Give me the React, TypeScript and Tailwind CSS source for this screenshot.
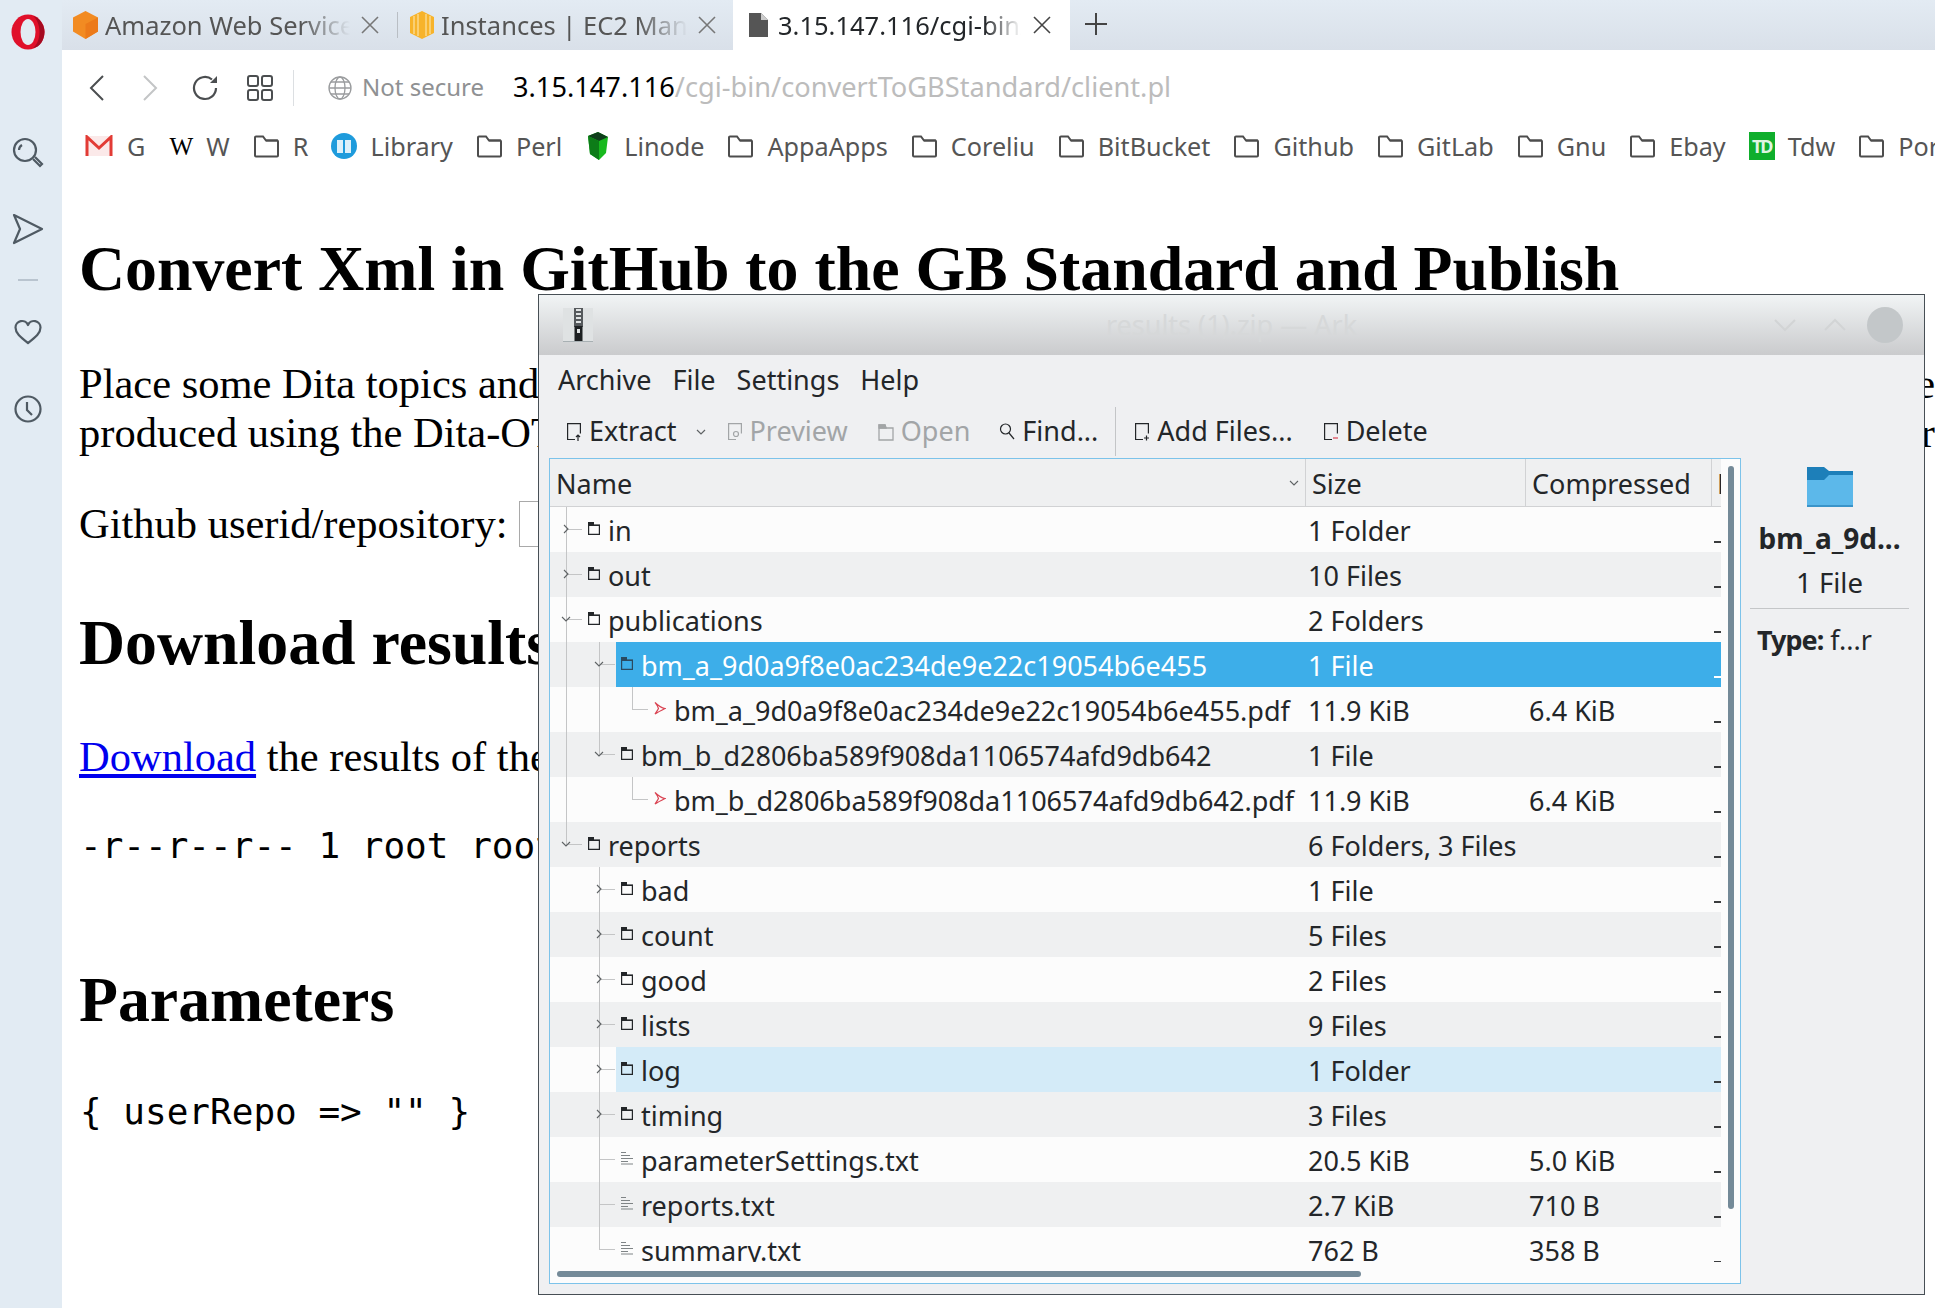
import type { ReactNode } from 'react';

type Kind = 'folder' | 'pdf' | 'txt';

interface Row {
  name: string;
  size: string;
  compressed?: string;
  level: number;
  kind: Kind;
  open?: boolean;
  selected?: boolean;
  hover?: boolean;
  // vertical guide lines: [level, stops at row middle]
  guides: [number, boolean][];
}

const rows: Row[] = [
  { name: 'in', size: '1 Folder', level: 0, kind: 'folder', guides: [[0, false]] },
  { name: 'out', size: '10 Files', level: 0, kind: 'folder', guides: [[0, false]] },
  { name: 'publications', size: '2 Folders', level: 0, kind: 'folder', open: true, guides: [[0, false]] },
  { name: 'bm_a_9d0a9f8e0ac234de9e22c19054b6e455', size: '1 File', level: 1, kind: 'folder', open: true, selected: true, guides: [[0, false], [1, false]] },
  { name: 'bm_a_9d0a9f8e0ac234de9e22c19054b6e455.pdf', size: '11.9 KiB', compressed: '6.4 KiB', level: 2, kind: 'pdf', guides: [[0, false], [1, false], [2, true]] },
  { name: 'bm_b_d2806ba589f908da1106574afd9db642', size: '1 File', level: 1, kind: 'folder', open: true, guides: [[0, false], [1, true]] },
  { name: 'bm_b_d2806ba589f908da1106574afd9db642.pdf', size: '11.9 KiB', compressed: '6.4 KiB', level: 2, kind: 'pdf', guides: [[0, false], [2, true]] },
  { name: 'reports', size: '6 Folders, 3 Files', level: 0, kind: 'folder', open: true, guides: [[0, true]] },
  { name: 'bad', size: '1 File', level: 1, kind: 'folder', guides: [[1, false]] },
  { name: 'count', size: '5 Files', level: 1, kind: 'folder', guides: [[1, false]] },
  { name: 'good', size: '2 Files', level: 1, kind: 'folder', guides: [[1, false]] },
  { name: 'lists', size: '9 Files', level: 1, kind: 'folder', guides: [[1, false]] },
  { name: 'log', size: '1 Folder', level: 1, kind: 'folder', hover: true, guides: [[1, false]] },
  { name: 'timing', size: '3 Files', level: 1, kind: 'folder', guides: [[1, false]] },
  { name: 'parameterSettings.txt', size: '20.5 KiB', compressed: '5.0 KiB', level: 1, kind: 'txt', guides: [[1, false]] },
  { name: 'reports.txt', size: '2.7 KiB', compressed: '710 B', level: 1, kind: 'txt', guides: [[1, false]] },
  { name: 'summary.txt', size: '762 B', compressed: '358 B', level: 1, kind: 'txt', guides: [[1, true]] },
];

const bookmarks = ['Perl', 'Linode', 'AppaApps', 'Coreliu', 'BitBucket', 'Github', 'GitLab', 'Gnu', 'Ebay', 'Tdw', 'Por'];

function FolderOutline() {
  return (
    <svg width="27" height="24" viewBox="0 0 27 24" fill="none" stroke="#4d4d4d" strokeWidth="2" className="shrink-0">
      <path d="M2 21.5V3.5a1 1 0 0 1 1-1h7l3 4h11a1 1 0 0 1 1 1v14a1 1 0 0 1-1 1H3a1 1 0 0 1-1-1z" />
      <path d="M13 6.5h12" />
    </svg>
  );
}

function TreeIcon({ kind, selected }: { kind: Kind; selected?: boolean }) {
  if (kind === 'pdf') {
    return (
      <svg width="12" height="14" viewBox="0 0 12 14" fill="none" stroke="#da4453" strokeWidth="1.2" className="shrink-0">
        <path d="M1 1.500C3 4 4 6 4.500 7.500 3.500 9.500 2 11.500 1 13c3-2 6-3.500 10-5.500-3.500-.5-7-3-10-6z" />
      </svg>
    );
  }
  if (kind === 'txt') {
    return (
      <svg width="12" height="14" viewBox="0 0 12 14" stroke="#7f8486" strokeWidth="1.2" className="shrink-0">
        <path d="M0 1.500h5M0 4.500h9M0 7.500h12M0 10.500h7M0 13h12" />
      </svg>
    );
  }
  const color = selected ? '#2a4a60' : '#232629';
  return (
    <svg width="12" height="13" viewBox="0 0 12 13" fill="none" stroke={color} strokeWidth="1.2" className="shrink-0">
      <path d="M.6 12.400V3h10.800v9.400z" />
      <path d="M0 0h6v3.400H0z" fill={color} stroke="none" />
      <path d="M0 2.800h12v1.200H0z" fill={color} stroke="none" />
    </svg>
  );
}

function Chevron({ open }: { open?: boolean }) {
  return (
    <svg width="10" height="10" viewBox="0 0 10 10" fill="none" stroke="#5f6365" strokeWidth="1.1">
      <path d={open ? 'M1 3l4 4 4-4' : 'M3 1l4 4-4 4'} />
    </svg>
  );
}

function TreeRow({ row, index }: { row: Row; index: number }) {
  const x = 16 + row.level * 33;
  const bg = index % 2 === 0 ? 'bg-[#fcfcfc]' : 'bg-[#eff0f1]';
  return (
    <div className={`relative flex h-[45px] shrink-0 items-center pt-[4px] text-[#232629] ${bg}`}>
      {row.selected && <div className="absolute inset-y-0 left-[66px] right-0 bg-[#3daee9]" />}
      {row.hover && <div className="absolute inset-y-0 left-[66px] right-0 bg-[#d4ebf8]" />}

      {/* tree guide lines */}
      {row.guides.map(([level, half]) => (
        <div
          key={level}
          className={`absolute top-0 w-px bg-[#c4c5c6] ${half ? 'h-[22px]' : 'h-[45px]'}`}
          style={{ left: 16 + level * 33 }}
        />
      ))}
      <div className="absolute top-[22px] h-px w-[16px] bg-[#c4c5c6]" style={{ left: x }} />
      {row.kind === 'folder' && (
        <div className="absolute top-[17px]" style={{ left: x - 5 }}>
          <Chevron open={row.open} />
        </div>
      )}

      <div className="relative flex w-[755px] shrink-0 items-center gap-[8px] whitespace-nowrap" style={{ paddingLeft: x + 22 }}>
        <div className="-mt-[7px] flex">
          <TreeIcon kind={row.kind} selected={row.selected} />
        </div>
        <span className={row.selected ? 'text-white' : ''}>{row.name}</span>
      </div>
      <div className={`relative w-[224px] shrink-0 pl-[3px] ${row.selected ? 'text-white' : ''}`}>{row.size}</div>
      <div className="relative pl-0">{row.compressed}</div>
      <div className={`absolute bottom-[9px] right-0 h-[2px] w-[7px] ${row.selected ? 'bg-white' : 'bg-[#3a3c3e]'}`} />
    </div>
  );
}

function ToolButton({ icon, label, disabled, className }: { icon: ReactNode; label: string; disabled?: boolean; className?: string }) {
  return (
    <div className={`flex items-center gap-[7px] ${disabled ? 'text-[#a2a5a7]' : 'text-[#232629]'} ${className ?? ''}`}>
      {icon}
      <span>{label}</span>
    </div>
  );
}

function DocIcon({ stroke = '#232629', mark }: { stroke?: string; mark?: ReactNode }) {
  return (
    <svg width="16" height="20" viewBox="0 0 16 20" fill="none" stroke={stroke} strokeWidth="1.2" className="shrink-0">
      <path d="M9 17.500H1.600V1.600h12.800v10" />
      {mark}
    </svg>
  );
}

function ArkWindow() {
  return (
    <div className="absolute left-[538px] top-[294px] flex h-[1001px] w-[1387px] flex-col border-[1px] border-[#474f55] bg-[#eff0f2] font-['Noto_Sans',sans-serif] text-[27px]">
      {/* title bar */}
      <div className="relative flex h-[60px] shrink-0 items-center bg-gradient-to-b from-[#f1f4f5] to-[#cacbcd]">
        <svg width="30" height="34" viewBox="0 0 30 34" className="ml-[24px] shrink-0">
          <rect width="30" height="34" fill="#dfe2e3" />
          <rect y="33" width="30" height="1" fill="#a8b0b3" />
          <path d="M11 0h9v19h-9z" fill="#55595c" />
          <path d="M13 1h5v2h-5zM13 5h5v2h-5zM13 9h5v2h-5zM13 13h5v2h-5z" fill="#dfe2e3" />
          <rect x="11.500" y="18" width="8" height="15" fill="#1d2022" />
          <rect x="14" y="21" width="3" height="4" fill="#dfe2e3" />
        </svg>
        <div className="absolute inset-x-0 top-[10px] text-center text-[#d6d8d9]">results (1).zip — Ark</div>
        <svg width="24" height="14" viewBox="0 0 24 14" fill="none" stroke="#d2d4d5" strokeWidth="2" className="ml-auto">
          <path d="M2 2l10 10L22 2" />
        </svg>
        <svg width="24" height="14" viewBox="0 0 24 14" fill="none" stroke="#d2d4d5" strokeWidth="2" className="ml-[26px]">
          <path d="M2 12L12 2l10 10" />
        </svg>
        <div className="ml-[20px] mr-[21px] h-[36px] w-[36px] rounded-full bg-[#c3c7c9]" />
      </div>

      {/* menu bar */}
      <div className="flex h-[50px] shrink-0 items-center gap-[21px] pl-[19px] text-[#232629]">
        <span>Archive</span>
        <span>File</span>
        <span>Settings</span>
        <span>Help</span>
      </div>

      {/* toolbar */}
      <div className="flex h-[53px] shrink-0 items-center pl-[27px]">
        <ToolButton icon={<DocIcon mark={<path d="M12 19v-6M10 15l2-2 2 2" />} />} label="Extract" />
        <svg width="10" height="8" viewBox="0 0 10 8" fill="none" stroke="#5f6365" strokeWidth="1.2" className="ml-[19px]">
          <path d="M1 2l4 4 4-4" />
        </svg>
        <ToolButton className="ml-[21px]" disabled icon={<DocIcon stroke="#a2a5a7" mark={<circle cx="9" cy="12" r="2.500" />} />} label="Preview" />
        <ToolButton
          className="ml-[30px]"
          disabled
          icon={
            <svg width="16" height="18" viewBox="0 0 16 18" fill="none" stroke="#a2a5a7" strokeWidth="1.3" className="shrink-0">
              <path d="M1 17V2h6l1 3h7v12zM1 5h14" />
              <path d="M1 2h6l1 3H1z" fill="#a2a5a7" />
            </svg>
          }
          label="Open"
        />
        <ToolButton
          className="ml-[29px]"
          icon={
            <svg width="16" height="19" viewBox="0 0 16 19" fill="none" stroke="#232629" strokeWidth="1.2" className="shrink-0">
              <circle cx="6.500" cy="7" r="5" />
              <path d="M10 11l5 6" />
            </svg>
          }
          label="Find..."
        />
        <div className="ml-[17px] h-[49px] w-px bg-[#c3c5c7]" />
        <ToolButton className="ml-[18px]" icon={<DocIcon mark={<path d="M10 16h5M12.500 13.500v5" />} />} label="Add Files..." />
        <ToolButton className="ml-[30px]" icon={<DocIcon mark={<path d="M10 16h5" stroke="#da4453" />} />} label="Delete" />
      </div>

      <div className="flex min-h-0 flex-1">
        {/* archive tree */}
        <div className="relative ml-[10px] h-[826px] w-[1192px] shrink-0 overflow-hidden border border-[#7cc3ea] bg-[#fcfcfc]">
          <div className="flex h-[48px] w-[1171px] items-center border-b border-[#d1d2d4] bg-[#eff0f1] text-[#232629]">
            <div className="relative flex h-full w-[755px] shrink-0 items-center pl-[6px] pt-[3px]">
              Name
              <svg width="10" height="8" viewBox="0 0 10 8" fill="none" stroke="#5f6365" strokeWidth="1.1" className="absolute right-[6px] top-[20px]">
                <path d="M1 2l4 4 4-4" />
              </svg>
            </div>
            <div className="flex h-full w-[220px] shrink-0 items-center border-l border-[#d1d2d4] pl-[6px] pt-[3px]">Size</div>
            <div className="flex h-full w-[186px] shrink-0 items-center border-l border-[#d1d2d4] pl-[6px] pt-[3px]">Compressed</div>
            <div className="flex h-full w-[10px] shrink-0 items-center overflow-hidden border-l border-[#d1d2d4] pl-[5px] pt-[3px]">Ratio</div>
          </div>
          <div className="flex h-[755px] w-[1171px] flex-col overflow-hidden">
            {rows.map((row, i) => (
              <TreeRow key={row.name + i} row={row} index={i} />
            ))}
          </div>
          {/* scrollbars */}
          <div className="absolute right-[6px] top-[7px] h-[743px] w-[6px] rounded-full bg-[#748a98]" />
          <div className="absolute bottom-[6px] left-[7px] h-[6px] w-[804px] rounded-full bg-[#748a98]" />
        </div>

        {/* details panel */}
        <div className="ml-[9px] flex w-[159px] flex-col items-center text-[#232629]">
          <svg width="46" height="40" viewBox="0 0 46 40" className="mt-[9px] shrink-0">
            <path d="M0 0h17l5 4h24v36H0z" fill="#1d7fb9" />
            <path d="M0 13h17l5-5h24v32H0z" fill="#5cb8ea" />
            <rect y="38" width="46" height="2" fill="#3a94c9" />
          </svg>
          <div className="mt-[11px] whitespace-nowrap text-[28px] font-bold leading-[40px]">bm_a_9d...</div>
          <div className="mt-[5px] text-[27.5px] leading-[40px]">1 File</div>
          <div className="mt-[5px] h-px w-full bg-[#c4c6c8]" />
          <div className="mt-[11px] w-full pl-[7px] leading-[40px]">
            <span className="font-bold tracking-[-1px]">Type:</span> f...r
          </div>
        </div>
      </div>
    </div>
  );
}

function BrowserChrome() {
  return (
    <>
      {/* tab strip */}
      <div className="flex h-[50px] shrink-0 items-stretch bg-gradient-to-b from-[#e3ebf3] to-[#d9e0e9] pl-[11px] text-[25.5px] text-[#555]">
        <div className="flex w-[324px] items-center gap-[7px]">
          <svg width="25" height="28" viewBox="0 0 25 28" className="shrink-0">
            <path d="M12.500 0L25 6.500v14L12.500 28 0 20.500v-14z" fill="#f28b22" />
            <path d="M12.500 13L25 6.500v14L12.500 28z" fill="#ec7a1a" />
          </svg>
          <span className="w-[245px] overflow-hidden whitespace-nowrap [mask-image:linear-gradient(to_right,black_80%,transparent)]">Amazon Web Services</span>
          <span className="ml-[4px] text-[#777]">
            <CloseIcon />
          </span>
        </div>
        <div className="my-[12px] w-px bg-[#b9bec4]" />
        <div className="flex w-[335px] items-center gap-[7px] pl-[12px]">
          <svg width="24" height="28" viewBox="0 0 24 28" className="shrink-0">
            <path d="M12 0l12 6v16l-12 6-12-6V6z" fill="#f7b32b" />
            <path d="M4 5v18M8 3v22M16 3v22M20 5v18" stroke="#fcd98a" strokeWidth="1.500" />
          </svg>
          <span className="w-[247px] overflow-hidden whitespace-nowrap [mask-image:linear-gradient(to_right,black_80%,transparent)]">Instances | EC2 Management</span>
          <span className="ml-[3px] text-[#777]">
            <CloseIcon />
          </span>
        </div>
        <div className="flex w-[337px] items-center gap-[10px] bg-white pl-[16px] text-[#232629]">
          <svg width="19" height="24" viewBox="0 0 19 24" className="shrink-0">
            <path d="M0 0h12l7 7v17H0z" fill="#555" />
            <path d="M12 0v7h7z" fill="#ccc" />
          </svg>
          <span className="w-[243px] overflow-hidden whitespace-nowrap [mask-image:linear-gradient(to_right,black_85%,transparent)]">3.15.147.116/cgi-bin/convertToGBStandard</span>
          <span className="ml-[2px] text-[#444]">
            <CloseIcon />
          </span>
        </div>
        <svg width="22" height="22" viewBox="0 0 22 22" stroke="#444" strokeWidth="2" className="ml-[15px] mt-[13px]">
          <path d="M11 0v22M0 11h22" />
        </svg>
      </div>

      {/* address bar */}
      <div className="flex h-[75px] shrink-0 items-center bg-white pl-[26px] font-['Noto_Sans',sans-serif] text-[27.2px]">
        <svg width="18" height="28" viewBox="0 0 18 28" fill="none" stroke="#4b4e50" strokeWidth="2" className="shrink-0">
          <path d="M15 2L3 14l12 12" />
        </svg>
        <svg width="18" height="28" viewBox="0 0 18 28" fill="none" stroke="#c3c5c6" strokeWidth="2" className="ml-[35px] shrink-0">
          <path d="M3 2l12 12L3 26" />
        </svg>
        <svg width="28" height="28" viewBox="0 0 28 28" fill="none" stroke="#4b4e50" strokeWidth="2.200" className="ml-[33px] shrink-0">
          <path d="M24 14a11 11 0 1 1-4-8.500" />
          <path d="M25 2v7h-7z" fill="#4b4e50" stroke="none" />
        </svg>
        <svg width="26" height="26" viewBox="0 0 26 26" fill="none" stroke="#4b4e50" strokeWidth="2" className="ml-[27px] shrink-0">
          <rect x="1" y="1" width="10" height="10" rx="2" />
          <rect x="15" y="1" width="10" height="10" rx="2" />
          <rect x="1" y="15" width="10" height="10" rx="2" />
          <rect x="15" y="15" width="10" height="10" rx="2" />
        </svg>
        <div className="ml-[20px] h-[36px] w-px bg-[#dcdfe2]" />
        <svg width="24" height="24" viewBox="0 0 24 24" fill="none" stroke="#9a9c9e" strokeWidth="1.300" className="ml-[34px] shrink-0">
          <circle cx="12" cy="12" r="11" />
          <ellipse cx="12" cy="12" rx="5" ry="11" />
          <path d="M1 12h22M3 6h18M3 18h18" />
        </svg>
        <span className="ml-[10px] -mt-[2px] text-[24px] text-[#8f9193]">Not secure</span>
        <span className="ml-[29px] whitespace-nowrap">
          <span className="text-black">3.15.147.116</span>
          <span className="text-[#bcbcbc]">/cgi-bin/convertToGBStandard/client.pl</span>
        </span>
      </div>

      {/* bookmarks bar */}
      <div className="flex h-[43px] shrink-0 items-center gap-[23px] overflow-hidden whitespace-nowrap bg-white pl-[23px] font-['Noto_Sans',sans-serif] text-[25.2px] text-[#555]">
        <div className="flex items-center gap-[14px]">
          <svg width="28" height="22" viewBox="0 0 28 22" fill="none" className="shrink-0">
            <rect x="1" y="1" width="26" height="20" fill="#fbe9e9" />
            <path d="M2 21V2l12 11L26 2v19" stroke="#e23b35" strokeWidth="3" />
          </svg>
          G
        </div>
        <div className="flex items-center gap-[12px]">
          <span className="w-[26px] text-center font-['Liberation_Serif',serif] text-black">W</span>W
        </div>
        <div className="flex items-center gap-[13px]">
          <FolderOutline />R
        </div>
        <div className="flex items-center gap-[13px]">
          <svg width="26" height="28" viewBox="0 0 26 28" className="shrink-0">
            <circle cx="13" cy="14" r="13" fill="#1e9bdc" />
            <path d="M6 8h6v13H6zM14 8h6v13h-6z" fill="#fff" opacity="0.85" />
          </svg>
          Library
        </div>
        {bookmarks.map((label) => (
          <div key={label} className="flex items-center gap-[13px]">
            {label === 'Linode' ? (
              <svg width="26" height="28" viewBox="0 0 26 28" className="shrink-0">
                <path d="M3 4l10-4 10 5-2 16-7 7-9-6z" fill="#18b91e" />
                <path d="M3 4l10-4 10 5-9 4z" fill="#0f3d1b" />
                <path d="M3 4l11 5v19l-9-6z" fill="#0d7c18" />
              </svg>
            ) : label === 'Tdw' ? (
              <div className="flex h-[28px] w-[26px] shrink-0 items-center justify-center bg-[#0fae2c] text-[18px] font-bold leading-none tracking-[-2px] text-[#dff5e2]">TD</div>
            ) : (
              <FolderOutline />
            )}
            {label}
          </div>
        ))}
      </div>
    </>
  );
}

function CloseIcon() {
  return (
    <svg width="18" height="18" viewBox="0 0 18 18" stroke="currentColor" strokeWidth="1.600" className="block">
      <path d="M1 1l16 16M17 1L1 17" />
    </svg>
  );
}

function Sidebar() {
  return (
    <div className="flex w-[62px] shrink-0 flex-col items-center bg-[#e2ebf3] pr-[6px]">
      <svg width="34" height="36" viewBox="0 0 34 36" className="mt-[14px] shrink-0">
        <ellipse cx="17" cy="18" rx="16.500" ry="17.500" fill="#e0102a" />
        <ellipse cx="17" cy="18" rx="7.500" ry="13" fill="#e2ebf3" />
        <path d="M22 2c7 2 11.500 9 11.500 16S29 34 22 34c4-3 6.500-9 6.500-16S26 5 22 2z" fill="#a50a20" />
      </svg>
      <svg width="32" height="32" viewBox="0 0 32 32" fill="none" stroke="#4f5a63" strokeWidth="2.200" className="mt-[87px] shrink-0">
        <circle cx="13" cy="13" r="11" />
        <path d="M7 13a6 6 0 0 1 3-5" />
        <path d="M21 22l7 7 2-2-7-7" />
      </svg>
      <svg width="32" height="32" viewBox="0 0 32 32" fill="none" stroke="#4f5a63" strokeWidth="2.200" className="mt-[44px] shrink-0">
        <path d="M2 2l28 14L2 30l6-14z" strokeLinejoin="round" />
      </svg>
      <div className="mt-[34px] h-[2px] w-[20px] bg-[#b9c4cf]" />
      <svg width="28" height="26" viewBox="0 0 28 26" fill="none" stroke="#4f5a63" strokeWidth="2.200" className="mt-[38px] shrink-0">
        <path d="M14 24C6 18 1.500 14 1.500 8.500A6.500 6.500 0 0 1 14 6a6.500 6.500 0 0 1 12.500 2.500C26.500 14 22 18 14 24z" strokeLinejoin="round" />
      </svg>
      <svg width="28" height="28" viewBox="0 0 28 28" fill="none" stroke="#4f5a63" strokeWidth="2.200" className="mt-[50px] shrink-0">
        <circle cx="14" cy="14" r="12.500" />
        <path d="M13 7v8l5 5" />
      </svg>
    </div>
  );
}

export default function App() {
  return (
    <div className="relative flex h-[1308px] w-[1935px] overflow-hidden bg-white font-['Noto_Sans',sans-serif]">
      <Sidebar />
      <div className="flex min-w-0 flex-1 flex-col">
        <BrowserChrome />

        {/* page content */}
        <div className="flex flex-col pl-[17px] font-['Liberation_Serif',serif] text-[42.5px] leading-[49px] text-black">
          <h1 className="mt-[64px] whitespace-nowrap text-[63.8px] font-bold leading-[74px]">Convert Xml in GitHub to the GB Standard and Publish</h1>
          <div className="mt-[53px] flex justify-between whitespace-nowrap">
            <span>Place some Dita topics and</span>
            <span>e</span>
          </div>
          <div className="flex justify-between whitespace-nowrap">
            <span>produced using the Dita-OT</span>
            <span>r</span>
          </div>
          <div className="mt-[42px] flex items-center whitespace-nowrap">
            Github userid/repository:
            <div className="ml-[11px] h-[46px] w-[60px] border border-[#a9a9a9]" />
          </div>
          <h2 className="mt-[60px] whitespace-nowrap text-[63.8px] font-bold leading-[70px]">Download results</h2>
          <div className="mt-[54px] whitespace-nowrap">
            <span className="text-[#0000ee] underline">Download</span> the results of the
          </div>
          <div className="ml-px mt-[40px] whitespace-nowrap font-['DejaVu_Sans_Mono',monospace] text-[36px] leading-[49px]">-r--r--r-- 1 root root</div>
          <h2 className="mt-[95px] text-[63.8px] font-bold leading-[70px]">Parameters</h2>
          <div className="ml-px mt-[52px] whitespace-nowrap font-['DejaVu_Sans_Mono',monospace] text-[36px] leading-[49px]">{'{ userRepo => "" }'}</div>
        </div>
      </div>
      <ArkWindow />
    </div>
  );
}
